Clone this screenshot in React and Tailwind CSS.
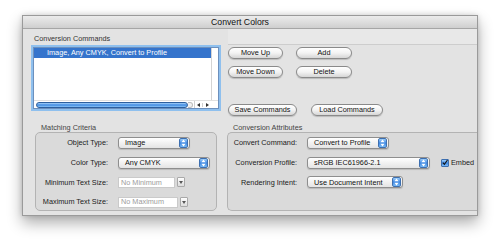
import React from "react";

const font = "font-['Liberation_Sans',Arial,sans-serif]";

function Pill({ className, children }) {
  return (
    <div
      className={`h-[12px] rounded-full border border-[#8a8a8a] bg-linear-to-b from-white via-[#f3f3f3] to-[#d6d6d6] flex items-center justify-center text-[7.3px] leading-none text-[#111] shadow-[0_1px_1px_rgba(0,0,0,0.18)] ${className}`}
    >
      {children}
    </div>
  );
}

function Arrows() {
  return (
    <svg width="5" height="8" viewBox="0 0 5 8">
      <polygon points="2.5,0.6 4.6,3.2 0.4,3.2" fill="#fff" />
      <polygon points="0.4,4.8 4.6,4.8 2.5,7.4" fill="#fff" />
    </svg>
  );
}

function Popup({ className, children }) {
  return (
    <div
      className={`h-[12px] rounded-[3px] border border-[#8e8e8e] bg-linear-to-b from-white to-[#e4e4e4] flex items-center shadow-[0_1px_1px_rgba(0,0,0,0.15)] ${className}`}
    >
      <span className="flex-1 pl-[6px] text-[7.3px] leading-none text-[#111] whitespace-nowrap overflow-hidden">
        {children}
      </span>
      <span className="w-[9px] h-[10px] mr-[1px] rounded-[2px] bg-linear-to-b from-[#9fd0fa] via-[#3c86e2] to-[#7cbcf6] border border-[#3d6fb0] flex items-center justify-center">
        <Arrows />
      </span>
    </div>
  );
}

function Field({ className, children }) {
  return (
    <div className="flex items-center gap-[2px]">
      <div
        className={`h-[11px] bg-white border border-[#cacaca] pl-[2px] flex items-center text-[7.3px] leading-none text-[#9c9c9c] ${className}`}
      >
        {children}
      </div>
      <div className="w-[8px] h-[10px] rounded-[1px] border border-[#a9a9a9] bg-linear-to-b from-white to-[#dcdcdc] flex items-center justify-center">
        <svg width="4" height="3" viewBox="0 0 4 3">
          <polygon points="0,0 4,0 2,3" fill="#555" />
        </svg>
      </div>
    </div>
  );
}

function Row({ label, labelWidth, children }) {
  return (
    <div className="h-[12px] flex items-center">
      <div
        className={`${labelWidth} text-right text-[7.3px] leading-none text-[#1a1a1a] whitespace-nowrap`}
      >
        {label}
      </div>
      <div className="ml-[10px] flex items-center">{children}</div>
    </div>
  );
}

export default function App() {
  return (
    <div className={`w-[500px] h-[244px] bg-white overflow-hidden ${font}`}>
      <div className="ml-[22px] mt-[15px] w-[456px] h-[201px] border border-[#9a9a9a] bg-[#e3e3e3] flex flex-col shadow-[0_7px_14px_rgba(0,0,0,0.32),0_0_5px_rgba(0,0,0,0.15)]">
        {/* title bar */}
        <div className="h-[13px] border-b border-[#a6a6a6] bg-linear-to-b from-[#ececec] to-[#cfcfcf] flex items-center justify-center pr-[20px] text-[8.7px] leading-[12px] text-[#111]">
          Convert Colors
        </div>

        {/* commands */}
        <div className="flex">
          <div className="pl-[10px] pt-[5px] flex flex-col">
            <div className="h-[10px] leading-[10px] pl-[1px] text-[7.3px] text-[#333]">
              Conversion Commands
            </div>
            <div className="mt-[3px] w-[186px] h-[62px] bg-white border border-[#6d90bd] ring-2 ring-[#8fc0ee] flex flex-col">
              <div className="flex-1 flex">
                <div className="flex-1">
                  <div className="h-[10px] bg-[#3574cc] pl-[13px] flex items-center text-[7.3px] leading-none text-white whitespace-nowrap">
                    Image, Any CMYK, Convert to Profile
                  </div>
                </div>
                <div className="w-[7px] border-l border-[#d4d4d4]" />
              </div>
              <div className="h-[8px] flex items-center border-t border-[#e0e0e0]">
                <div className="ml-[2px] w-[152px] h-[6px] rounded-full border border-[#2d5f9e] bg-linear-to-b from-[#a9d4fa] via-[#3f8ae0] to-[#8cc5f7]" />
                <div className="w-[5px] h-[6px] rounded-r-full border border-l-0 border-[#bdbdbd] bg-[#f2f2f2]" />
                <div className="ml-auto mr-[7px] flex items-center h-full border-l border-[#cfcfcf]">
                  <span className="w-[8px] flex justify-center border-r border-[#cfcfcf]">
                    <svg width="3" height="4" viewBox="0 0 3 4">
                      <polygon points="3,0 3,4 0,2" fill="#333" />
                    </svg>
                  </span>
                  <span className="w-[8px] flex justify-center">
                    <svg width="3" height="4" viewBox="0 0 3 4">
                      <polygon points="0,0 0,4 3,2" fill="#333" />
                    </svg>
                  </span>
                </div>
              </div>
            </div>
          </div>

          <div className="flex-1 ml-[9px] flex flex-col">
            <div className="h-[16px] border-b border-[#cdcdcd] bg-[#e8e8e8]" />
            <div className="mt-[2px] flex gap-[13px]">
              <Pill className="w-[55px]">Move Up</Pill>
              <Pill className="w-[56px]">Add</Pill>
            </div>
            <div className="mt-[7px] flex gap-[13px]">
              <Pill className="w-[55px]">Move Down</Pill>
              <Pill className="w-[56px]">Delete</Pill>
            </div>
            <div className="mt-[26px] flex gap-[14px]">
              <Pill className="w-[69px]">Save Commands</Pill>
              <Pill className="w-[72px]">Load Commands</Pill>
            </div>
          </div>
        </div>

        {/* groups */}
        <div className="mt-[8px] flex">
          <div className="ml-[12px] w-[182px] flex flex-col">
            <div className="h-[8px] leading-[8px] pl-[6px] text-[7.3px] text-[#444]">
              Matching Criteria
            </div>
            <div className="h-[79px] rounded-[5px] border border-[#b3b3b3] bg-[#dadada] pt-[4px] flex flex-col gap-[7.7px]">
              <Row label="Object Type:" labelWidth="w-[72px]">
                <Popup className="w-[72px]">Image</Popup>
              </Row>
              <Row label="Color Type:" labelWidth="w-[72px]">
                <Popup className="w-[92px]">Any CMYK</Popup>
              </Row>
              <Row label="Minimum Text Size:" labelWidth="w-[72px]">
                <Field className="w-[57px]">No Minimum</Field>
              </Row>
              <Row label="Maximum Text Size:" labelWidth="w-[72px]">
                <Field className="w-[60px]">No Maximum</Field>
              </Row>
            </div>
          </div>

          <div className="ml-[10px] flex-1 flex flex-col">
            <div className="h-[8px] leading-[8px] pl-[6px] text-[7.3px] text-[#444]">
              Conversion Attributes
            </div>
            <div className="h-[79px] rounded-l-[5px] border border-r-0 border-[#b3b3b3] bg-[#dadada] pt-[4px] flex flex-col gap-[7.7px]">
              <Row label="Convert Command:" labelWidth="w-[69px]">
                <Popup className="w-[82px]">Convert to Profile</Popup>
              </Row>
              <Row label="Conversion Profile:" labelWidth="w-[69px]">
                <Popup className="w-[123px]">sRGB IEC61966-2.1</Popup>
                <div className="ml-[11px] w-[8px] h-[8px] rounded-[1px] border border-[#3d6fb0] bg-linear-to-b from-[#9fd0fa] via-[#3c86e2] to-[#7cbcf6] flex items-center justify-center">
                  <svg width="7" height="7" viewBox="0 0 7 7">
                    <path d="M1 3.6 L2.8 5.6 L6.4 0.6" stroke="#111" strokeWidth="1.3" fill="none" />
                  </svg>
                </div>
                <span className="ml-[2px] text-[7.3px] leading-none text-[#1a1a1a]">Embed</span>
              </Row>
              <Row label="Rendering Intent:" labelWidth="w-[69px]">
                <Popup className="w-[96px]">Use Document Intent</Popup>
              </Row>
            </div>
          </div>
        </div>
      </div>
    </div>
  );
}
